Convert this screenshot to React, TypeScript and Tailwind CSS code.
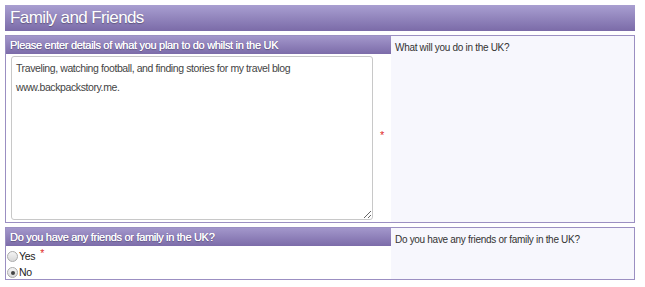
import React from "react";

function Radio({ checked }: { checked?: boolean }) {
	return (
		<span className="inline-flex w-[11px] h-[11px] rounded-full border border-[#aaa] bg-gradient-to-b from-[#f4f4f4] to-[#d8d8d8] items-center justify-center mr-[1px]">
			{checked && <span className="w-[4px] h-[4px] rounded-full bg-[#444]" />}
		</span>
	);
}

function SectionHeader({ children }: { children: React.ReactNode }) {
	return (
		<div className="h-[18px] bg-gradient-to-b from-[#a397cb] to-[#7c6ca9] text-white text-[11px] tracking-[-0.3px] leading-[18px] pl-[4px] [text-shadow:0_0_0.6px_rgba(255,255,255,0.9),0_1px_1px_rgba(0,0,0,0.3)]">
			{children}
		</div>
	);
}

export default function App() {
	return (
		<div className="w-[645px] h-[287px] bg-white pt-[5px] pl-[5px] font-['Liberation_Sans',Arial,sans-serif]">
			<div className="w-[630px] h-[26px] bg-gradient-to-b from-[#a99fd1] to-[#7b6ba8] text-white text-[17px] tracking-[-0.6px] leading-[26px] pl-[5px] [text-shadow:0_1px_1px_rgba(0,0,0,0.3)]">
				Family and Friends
			</div>

			<div className="mt-[4px] w-[630px] h-[188px] border border-[#9b8fc2] flex">
				<div className="w-[385px] flex flex-col">
					<SectionHeader>Please enter details of what you plan to do whilst in the UK</SectionHeader>
					<div className="flex-1 flex items-center">
						<textarea
							readOnly
							className="ml-[5px] w-[362px] h-[164px] border border-[#c8c8c8] rounded-[3px] text-[10.5px] tracking-[-0.4px] leading-[19px] text-[#444] px-[4px] py-[2px] resize-y outline-none"
							defaultValue={"Traveling, watching football, and finding stories for my travel blog\nwww.backpackstory.me."}
						/>
						<span className="ml-[7px] mt-[-6px] text-[#e02a2a] text-[11px] leading-none">*</span>
					</div>
				</div>
				<div className="flex-1 bg-[#f7f7fd] text-[10px] tracking-[-0.3px] text-[#333] pl-[4px] pt-[4px]">What will you do in the UK?</div>
			</div>

			<div className="mt-[4px] w-[630px] h-[53px] border border-[#9b8fc2] flex">
				<div className="w-[385px] flex flex-col">
					<SectionHeader>Do you have any friends or family in the UK?</SectionHeader>
					<div className="pl-[1px] pt-[2px] text-[10.5px] tracking-[-0.3px] text-[#222]">
						<div className="flex items-center h-[17px]">
							<Radio />
							<span>Yes</span>
							<span className="ml-[5px] text-[#e02a2a] self-start leading-[10px]">*</span>
						</div>
						<div className="flex items-center h-[15px]">
							<Radio checked />
							<span>No</span>
						</div>
					</div>
				</div>
				<div className="flex-1 bg-[#f7f7fd] text-[10px] tracking-[-0.3px] text-[#333] pl-[4px] pt-[4px]">Do you have any friends or family in the UK?</div>
			</div>
		</div>
	);
}
